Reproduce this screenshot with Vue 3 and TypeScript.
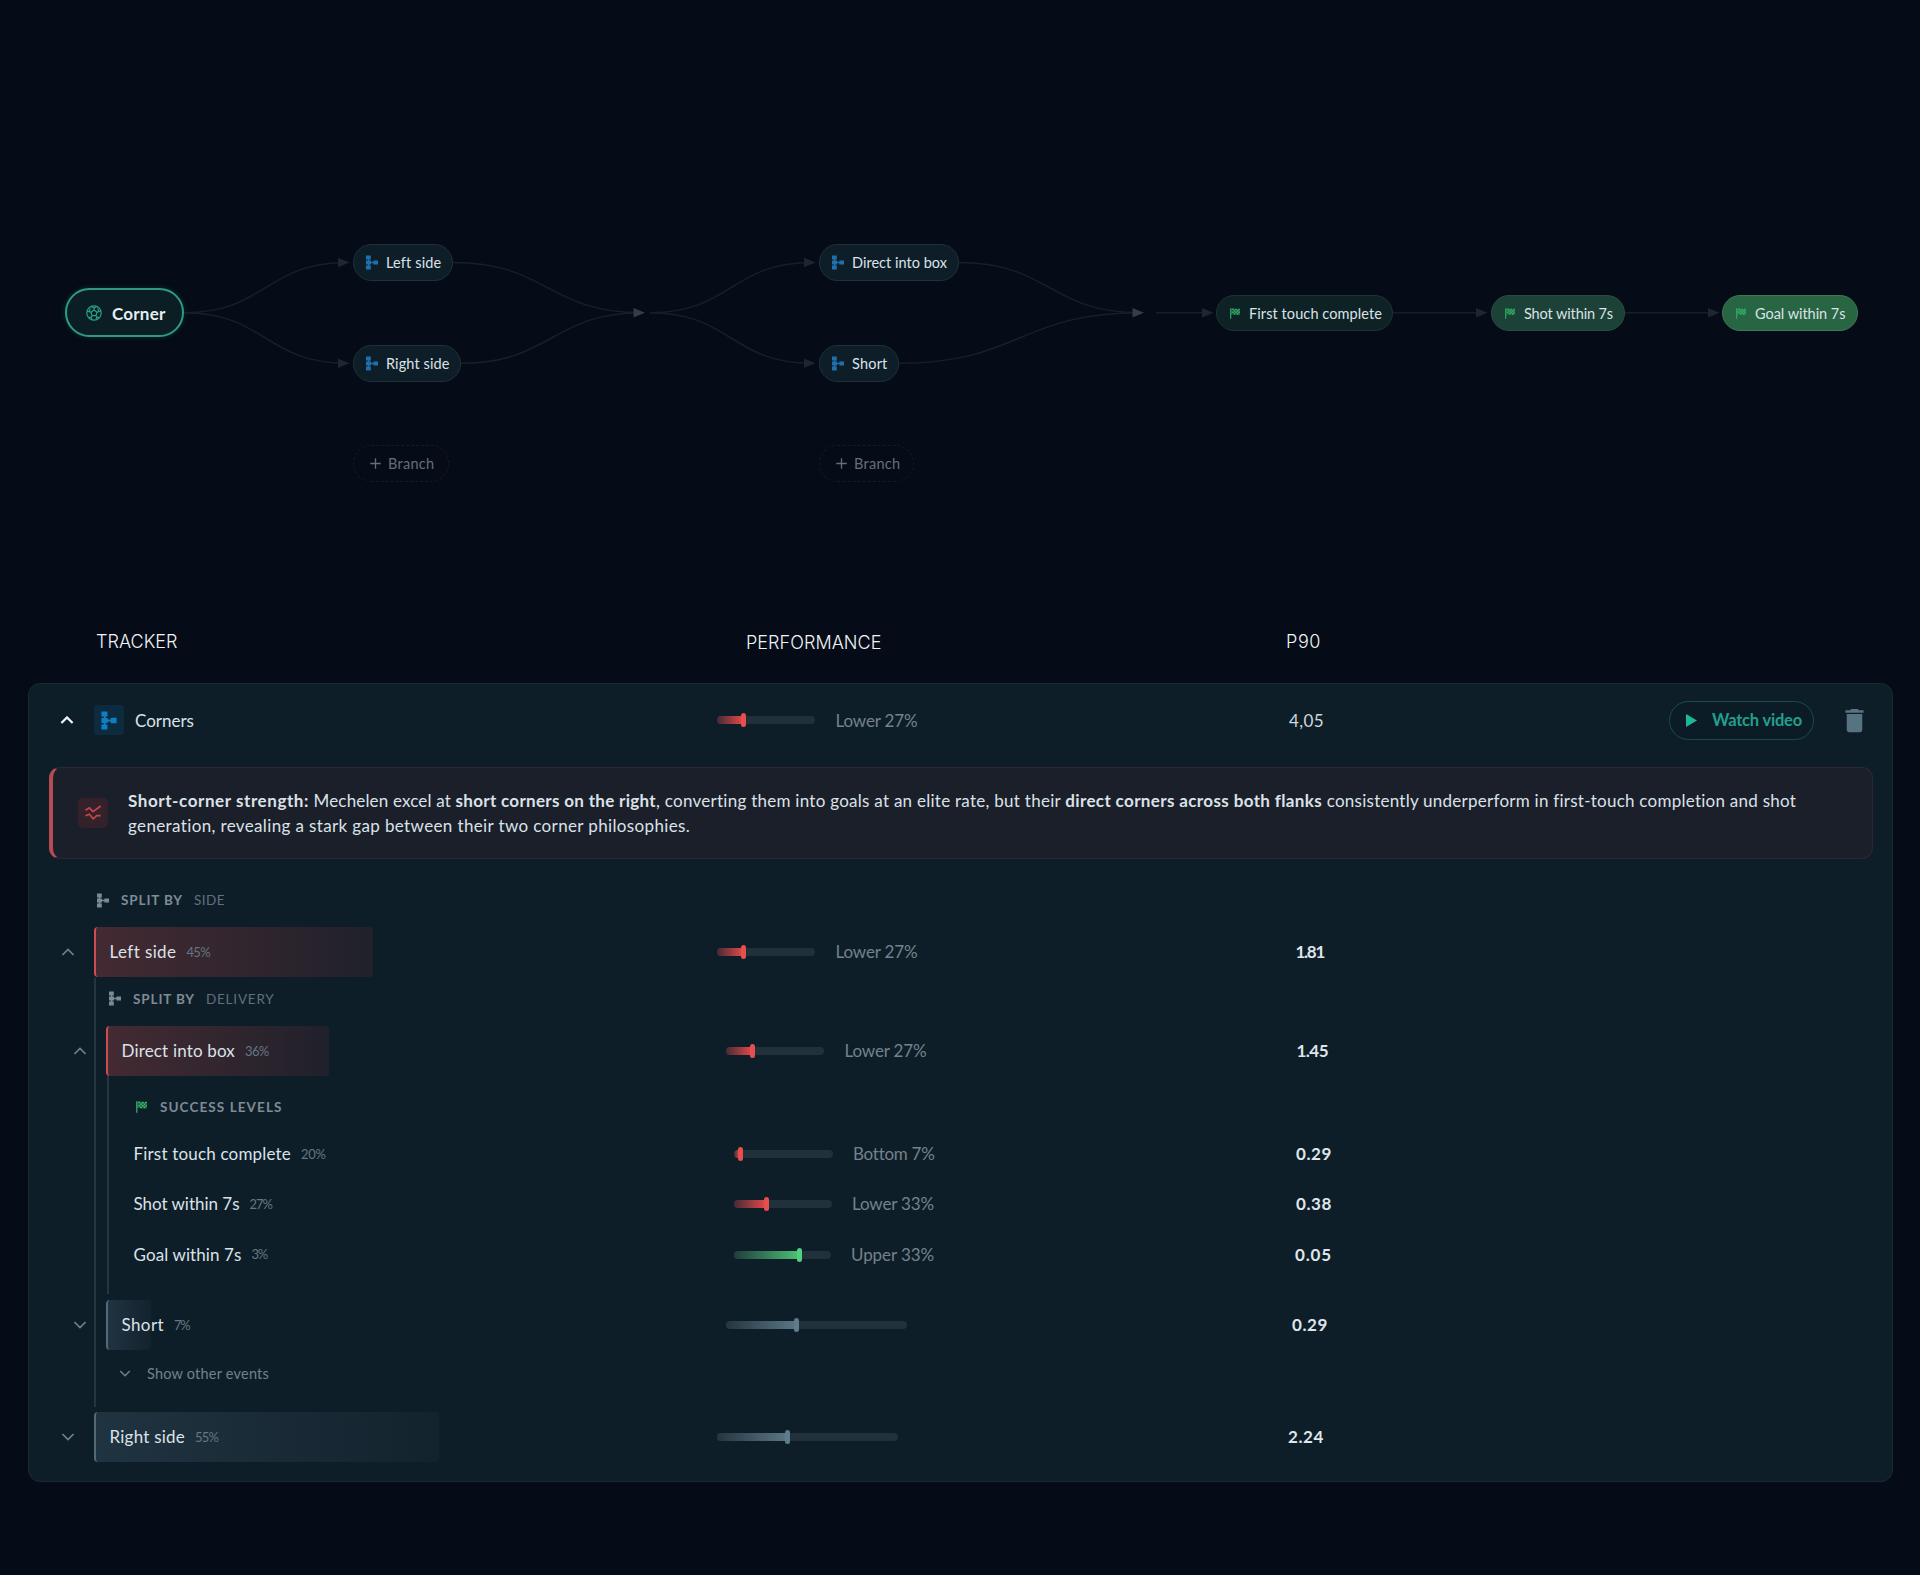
<script setup lang="ts">
import type { Directive } from 'vue'

interface FlowNode {
  label: string
  kind: 'branch' | 'add' | 'flag'
  x: number
  y: number
  w: number
  tw: number
  tone?: string
}

interface Meter {
  width: number
  value: number
  tone: 'red' | 'green' | 'slate'
  label?: string
  lw?: number
}

const vFit: Directive<HTMLElement, number> = {
  mounted(el, binding) {
    el.style.letterSpacing = '0px'
    const natural = el.getBoundingClientRect().width
    const count = (el.textContent ?? '').length
    el.style.letterSpacing = `${((binding.value - natural) / count).toFixed(3)}px`
  },
}

const nodes: FlowNode[] = [
  { label: 'Left side', kind: 'branch', x: 353, y: 244, w: 100, tw: 55 },
  { label: 'Right side', kind: 'branch', x: 353, y: 345, w: 108, tw: 63.5 },
  { label: 'Branch', kind: 'add', x: 353, y: 445, w: 96, tw: 46.5 },
  { label: 'Direct into box', kind: 'branch', x: 819, y: 244, w: 140, tw: 95 },
  { label: 'Short', kind: 'branch', x: 819, y: 345, w: 80, tw: 35.5 },
  { label: 'Branch', kind: 'add', x: 819, y: 445, w: 95, tw: 46.5 },
  { label: 'First touch complete', kind: 'flag', x: 1216, y: 295, w: 177, tw: 133, tone: 'tone-1' },
  { label: 'Shot within 7s', kind: 'flag', x: 1491, y: 295, w: 134, tw: 89, tone: 'tone-2' },
  { label: 'Goal within 7s', kind: 'flag', x: 1722, y: 295, w: 136, tw: 90.5, tone: 'tone-3' },
]

const curve = (x1: number, y1: number, x2: number, y2: number): string => {
  const m = (x1 + x2) / 2
  return `M${x1} ${y1}C${m} ${y1} ${m} ${y2} ${x2} ${y2}`
}

const edges: string[] = [
  curve(184, 312.7, 347, 262.5),
  curve(184, 312.7, 347, 363.3),
  curve(453, 262.5, 642, 312.7),
  curve(461, 363.3, 642, 312.7),
  curve(650, 312.7, 812, 262.5),
  curve(650, 312.7, 812, 363.3),
  curve(959, 262.5, 1140, 312.7),
  curve(899, 363.3, 1140, 312.7),
  'M1156 312.7H1209',
  'M1393 312.7H1484',
  'M1625 312.7H1716',
]

const arrows: { x: number; y: number; strong?: boolean }[] = [
  { x: 338, y: 262.5 },
  { x: 338, y: 363.3 },
  { x: 633.5, y: 312.7, strong: true },
  { x: 804, y: 262.5 },
  { x: 804, y: 363.3 },
  { x: 1132.5, y: 312.7, strong: true },
  { x: 1202, y: 312.7 },
  { x: 1476, y: 312.7 },
  { x: 1708, y: 312.7 },
]

const meters: Record<string, Meter> = {
  corners: { width: 98, value: 26, tone: 'red', label: 'Lower 27%', lw: 82 },
  left: { width: 98, value: 26, tone: 'red', label: 'Lower 27%', lw: 82 },
  direct: { width: 98, value: 26, tone: 'red', label: 'Lower 27%', lw: 82 },
  shortRow: { width: 181, value: 70, tone: 'slate' },
  right: { width: 181, value: 70, tone: 'slate' },
}

const successRows: { name: string; nw: number; pct: string; pw: number; meter: Meter; p90: string; vw: number }[] = [
  { name: 'First touch complete', nw: 157.5, pct: '20%', pw: 24.5, meter: { width: 99, value: 6, tone: 'red', label: 'Bottom 7%', lw: 81 }, p90: '0.29', vw: 36 },
  { name: 'Shot within 7s', nw: 106, pct: '27%', pw: 22.5, meter: { width: 98, value: 32, tone: 'red', label: 'Lower 33%', lw: 82 }, p90: '0.38', vw: 36 },
  { name: 'Goal within 7s', nw: 108, pct: '3%', pw: 15.5, meter: { width: 97, value: 65, tone: 'green', label: 'Upper 33%', lw: 83 }, p90: '0.05', vw: 37 },
]

const insight: { text: string; w: number; bold?: boolean }[] = [
  { text: 'Short-corner strength:', w: 181, bold: true },
  { text: ' Mechelen excel at ', w: 146.5 },
  { text: 'short corners on the right', w: 200.5, bold: true },
  { text: ', converting them into goals at an elite rate, but their ', w: 409.5 },
  { text: 'direct corners across both flanks', w: 257, bold: true },
  { text: ' consistently underperform in first-touch completion and shot', w: 474 },
]
</script>

<template>
  <main class="page">
    <svg class="sprite" width="0" height="0" aria-hidden="true">
      <symbol id="i-branch" viewBox="0 0 12 15">
        <path d="M2.6 2V13M2.6 7.5H9" stroke="currentColor" stroke-width="1.5" fill="none" />
        <path d="M0 .4h4.8v4H0zM0 5.5h5v4H0zM0 10.6h4.8v4H0zM7.4 5.4H12v4.2H7.4z" fill="currentColor" />
      </symbol>
      <symbol id="i-flag" viewBox="0 0 11 12">
        <path d="M.2 .2h1.2v11.6H.2z" fill="currentColor" />
        <path d="M1 .7q2.500-.5 5 0t5 0v6.600q-2.500.5-5 0t-5 0z" fill="currentColor" opacity=".4" />
        <path d="M2.500.6h1.700v1.600H2.500zM6 .8h1.700v1.600H6zM9.200.8h1.700v1.500H9.200zM4.200 2.200H6v1.700H4.200zM7.700 2.400h1.600v1.600H7.700zM2.500 3.900h1.700v1.600H2.500zM6 3.900h1.700v1.600H6zM9.300 3.900h1.600v1.600H9.300zM4.200 5.500H6v1.700H4.200zM7.700 5.500h1.600v1.800H7.700z" fill="currentColor" />
      </symbol>
      <symbol id="i-up" viewBox="0 0 14 8">
        <path d="M1.400 7 7 1.400 12.600 7" stroke="currentColor" fill="none" />
      </symbol>
      <symbol id="i-down" viewBox="0 0 14 8">
        <path d="M1.400 1 7 6.600 12.600 1" stroke="currentColor" fill="none" />
      </symbol>
    </svg>

    <section class="flow">
      <svg class="edges" width="1920" height="620" viewBox="0 0 1920 620">
        <path v-for="(d, i) in edges" :key="i" :d="d" fill="none" stroke="#181f2a" stroke-width="1.500" />
        <path
          v-for="(a, i) in arrows"
          :key="'a' + i"
          :d="`M${a.x} ${a.y - 4.700}l11.500 4.700l-11.500 4.700z`"
          :fill="a.strong ? '#363d48' : '#1f2630'"
        />
      </svg>
      <div class="root">
        <svg width="16" height="16" viewBox="0 0 16 16" fill="none" stroke="#2aa189" stroke-width="1.200">
          <circle cx="8" cy="8" r="7.200" />
          <path d="M8 5 11 7.200 9.900 10.700H6.100L5 7.200zM8 5V3.300M11 7.200l1.800-.6M9.900 10.700l1.100 1.600M6.100 10.700 5 12.300M5 7.200 3.200 6.600M5.300 1.500 8 3.300l2.700-1.800M14.900 6.400l-2.100.2-1-3.200M13.600 12.400 11 12.300l-1.200 2.500M6.200 14.800 5 12.300l-2.600.1M4.200 3.400l-1 3.200-2.100-.2" />
        </svg>
        <b v-fit="53.500">Corner</b>
      </div>
      <div
        v-for="(n, i) in nodes"
        :key="i"
        class="node"
        :class="[n.kind, n.tone]"
        :style="{ left: n.x + 'px', top: n.y + 'px', width: n.w + 'px' }"
      >
        <svg v-if="n.kind === 'branch'" class="ic" width="12" height="15"><use href="#i-branch" /></svg>
        <svg v-else-if="n.kind === 'flag'" class="ic" width="10" height="11"><use href="#i-flag" /></svg>
        <svg v-else class="ic" width="11" height="11" viewBox="0 0 11 11"><path d="M5.500 .3V10.700M.3 5.500H10.700" stroke="currentColor" stroke-width="1.300" /></svg>
        <span v-fit="n.tw">{{ n.label }}</span>
      </div>
    </section>

    <header class="heads">
      <span class="h-tracker"><span v-fit="81.500">TRACKER</span></span>
      <span class="h-perf"><span v-fit="135.500">PERFORMANCE</span></span>
      <span class="h-p90"><span v-fit="35">P90</span></span>
    </header>

    <section class="card">
      <div class="row top">
        <svg class="chev bright" width="14" height="8"><use href="#i-up" /></svg>
        <div class="title">
          <span class="badge"><svg width="16" height="19"><use href="#i-branch" /></svg></span>
          <span v-fit="59" class="name">Corners</span>
        </div>
        <div class="perf">
          <i class="meter red" :style="{ width: meters.corners.width + 'px' }">
            <i class="fill" :style="{ width: meters.corners.value + 'px' }"></i>
          </i>
          <span v-fit="82" class="rank">{{ meters.corners.label }}</span>
        </div>
        <span class="val plain"><span v-fit="35">4,05</span></span>
        <div class="actions">
          <button class="watch">
            <svg width="11" height="13" viewBox="0 0 11 13"><path d="M0 0 11 6.500 0 13z" fill="#1db899" /></svg>
            <span v-fit="90">Watch video</span>
          </button>
          <svg width="31" height="31" viewBox="0 0 24 24"><path fill="#577382" d="M19,4H15.500L14.500,3H9.500L8.500,4H5V6H19M6,19A2,2 0 0,0 8,21H16A2,2 0 0,0 18,19V7H6V19Z" /></svg>
        </div>
      </div>

      <div class="insight">
        <span class="alert-ic">
          <svg width="30" height="30" viewBox="0 0 30 30" fill="none" stroke="#c4474c" stroke-width="1.700">
            <path d="M7.500 12.200 11.300 9.800 15 13.700 22.700 8M7.500 17.800 11.300 16.200 15.300 20.800 18.700 17.600H22.700" />
          </svg>
        </span>
        <div class="copy">
          <div class="line">
            <span v-for="(s, i) in insight" :key="i" v-fit="s.w" :class="{ bold: s.bold }">{{ s.text }}</span>
          </div>
          <div class="line"><span v-fit="562.500">generation, revealing a stark gap between their two corner philosophies.</span></div>
        </div>
      </div>

      <div class="split first">
        <svg width="12" height="15"><use href="#i-branch" /></svg>
        <b v-fit="62">SPLIT BY</b><span v-fit="31">SIDE</span>
      </div>

      <div class="row d0">
        <svg class="chev" width="14" height="8"><use href="#i-up" /></svg>
        <div class="title">
          <div class="bar red" style="width: 279px"></div>
          <span v-fit="66.500" class="name">Left side</span><span v-fit="23.500" class="pct">45%</span>
        </div>
        <div class="perf">
          <i class="meter red" :style="{ width: meters.left.width + 'px' }"><i class="fill" :style="{ width: meters.left.value + 'px' }"></i></i>
          <span v-fit="82" class="rank">{{ meters.left.label }}</span>
        </div>
        <span class="val"><span v-fit="28.500">1.81</span></span>
      </div>

      <div class="group g1">
        <div class="split second">
          <svg width="12" height="15"><use href="#i-branch" /></svg>
          <b v-fit="62">SPLIT BY</b><span v-fit="68.500">DELIVERY</span>
        </div>
        <div class="row d1">
          <svg class="chev" width="14" height="8"><use href="#i-up" /></svg>
          <div class="title">
            <div class="bar red" style="width: 223px"></div>
            <span v-fit="113.500" class="name">Direct into box</span><span v-fit="23.500" class="pct">36%</span>
          </div>
          <div class="perf">
            <i class="meter red" :style="{ width: meters.direct.width + 'px' }"><i class="fill" :style="{ width: meters.direct.value + 'px' }"></i></i>
            <span v-fit="82" class="rank">{{ meters.direct.label }}</span>
          </div>
          <span class="val"><span v-fit="31.500">1.45</span></span>
        </div>

        <div class="group g2">
          <div class="success-label">
            <svg width="11" height="12"><use href="#i-flag" /></svg>
            <b v-fit="122.500">SUCCESS LEVELS</b>
          </div>
          <div v-for="r in successRows" :key="r.name" class="row d2">
            <div class="title">
              <span v-fit="r.nw" class="name">{{ r.name }}</span><span v-fit="r.pw" class="pct">{{ r.pct }}</span>
            </div>
            <div class="perf">
              <i class="meter" :class="r.meter.tone" :style="{ width: r.meter.width + 'px' }"><i class="fill" :style="{ width: r.meter.value + 'px' }"></i></i>
              <span v-fit="r.meter.lw" class="rank">{{ r.meter.label }}</span>
            </div>
            <span class="val"><span v-fit="r.vw">{{ r.p90 }}</span></span>
          </div>
        </div>

        <div class="row d1">
          <svg class="chev" width="14" height="8"><use href="#i-down" /></svg>
          <div class="title">
            <div class="bar slate" style="width: 45px"></div>
            <span v-fit="42.500" class="name">Short</span><span v-fit="15.500" class="pct">7%</span>
          </div>
          <div class="perf">
            <i class="meter slate" :style="{ width: meters.shortRow.width + 'px' }"><i class="fill" :style="{ width: meters.shortRow.value + 'px' }"></i></i>
          </div>
          <span class="val"><span v-fit="36">0.29</span></span>
        </div>
        <div class="more">
          <svg class="chev" width="12" height="7"><use href="#i-down" /></svg>
          <span v-fit="122">Show other events</span>
        </div>
      </div>

      <div class="row d0 last">
        <svg class="chev" width="14" height="8"><use href="#i-down" /></svg>
        <div class="title">
          <div class="bar slate" style="width: 345px"></div>
          <span v-fit="75.500" class="name">Right side</span><span v-fit="23" class="pct">55%</span>
        </div>
        <div class="perf">
          <i class="meter slate" :style="{ width: meters.right.width + 'px' }"><i class="fill" :style="{ width: meters.right.value + 'px' }"></i></i>
        </div>
        <span class="val"><span v-fit="36">2.24</span></span>
      </div>
    </section>
  </main>
</template>

<style>
body {
  background: #050c17;
}
</style>

<style scoped>
* {
  box-sizing: border-box;
}
.page {
  width: 1920px;
  height: 1575px;
  overflow: hidden;
  background: #050c17;
  color: #dbe2e8;
  font-family: Lato, 'Open Sans', sans-serif;
  font-size: 17px;
}
.page span,
.page b {
  white-space: pre;
}
.sprite {
  position: absolute;
}
.flow {
  position: relative;
  height: 620px;
}
.edges {
  display: block;
}
.root {
  position: absolute;
  left: 65px;
  top: 288px;
  width: 119px;
  height: 49px;
  display: flex;
  align-items: center;
  gap: 10px;
  padding-left: 19px;
  border: 2px solid #2f9986;
  border-radius: 25px;
  background: #0a1e24;
  box-shadow: 0 0 5px #06312f;
  color: #e6eef2;
  font-size: 17px;
}
.root b {
  font-weight: 700;
  padding-top: 1px;
}
.node {
  position: absolute;
  height: 37px;
  display: flex;
  align-items: center;
  padding-left: 12px;
  gap: 8px;
  border: 1px solid #202f39;
  border-radius: 19px;
  background: #0e1e29;
  font-size: 14.5px;
}
.node.branch .ic {
  color: #1d70ab;
}
.node.add {
  background: none;
  border: 1px dashed #131c27;
  color: #676e78;
  padding-left: 16px;
  gap: 7px;
}
.node.flag {
  height: 36px;
  padding-left: 13px;
  gap: 9px;
}
.node.flag .ic {
  color: #32b266;
}
.node.flag span {
  padding-top: 1px;
}
.tone-1 {
  background: #0e2226;
  border-color: #1f3135;
}
.tone-2 {
  background: #1c4136;
  border-color: #2b4c44;
}
.tone-3 {
  background: #286543;
  border-color: #3f7657;
}
.heads {
  display: flex;
  height: 63px;
  padding-left: 96px;
  font-family: Inter, sans-serif;
  font-weight: 300;
  font-size: 18px;
  line-height: 22px;
  color: #f1f4f7;
}
.heads > span {
  padding-top: 11px;
}
.h-tracker {
  width: 650px;
}
.heads .h-perf {
  width: 540px;
  padding-top: 12px;
}
.card {
  width: 1865px;
  height: 799px;
  margin-left: 28px;
  border: 1px solid #192a35;
  border-radius: 12px;
  background: #0e1e29;
}
.row {
  display: grid;
  grid-template-columns: 33px 623px 1fr 60px 548px;
  align-items: center;
  height: 50px;
  margin-left: 32px;
}
.chev {
  color: #6f818d;
  stroke-width: 1.7;
}
.chev.bright {
  color: #f2f5f7;
  stroke-width: 2.2;
}
.top {
  height: 72px;
  margin-left: 31px;
  grid-template-columns: 34px 623px 1fr 60px 548px;
}
.badge {
  width: 30px;
  height: 30px;
  display: flex;
  align-items: center;
  justify-content: center;
  border-radius: 4px;
  background: #0d2b3f;
  color: #0e7fc4;
  margin-right: 11px;
}
.title {
  position: relative;
  display: flex;
  align-items: center;
  height: 50px;
}
.name,
.pct {
  position: relative;
}
.name,
.rank,
.val {
  padding-bottom: 1px;
}
.top .name,
.top .rank,
.top .val {
  padding-bottom: 0;
}
.pct {
  margin-left: 10px;
  padding-bottom: 1px;
  font-size: 13px;
  color: #647783;
}
.bar {
  position: absolute;
  left: 0;
  top: 0;
  height: 50px;
  border-radius: 4px;
  border-left: 2px solid;
}
.bar.red {
  border-color: #cf4d52;
  background: linear-gradient(90deg, #442a32, #20212b);
}
.bar.slate {
  border-color: #526a78;
  background: linear-gradient(90deg, #203340, #13232e);
}
.d0 .title,
.d1 .title {
  padding-left: 15.500px;
}
.perf {
  display: flex;
  align-items: center;
}
.meter {
  display: block;
  height: 8px;
  border-radius: 4px;
  background: #22303c;
}
.fill {
  display: block;
  position: relative;
  height: 8px;
  border-radius: 4px 0 0 4px;
}
.fill::after {
  content: '';
  position: absolute;
  right: -3px;
  top: -3px;
  width: 5px;
  height: 14px;
  border-radius: 3px;
  background: var(--tone);
}
.meter.red {
  --tone: #e5504f;
}
.red .fill {
  background: linear-gradient(90deg, #442b34, #e44949);
}
.meter.green {
  --tone: #53cd7e;
}
.green .fill {
  background: linear-gradient(90deg, #213c3c, #4cc075);
}
.meter.slate {
  --tone: #5f7c8b;
}
.slate .fill {
  background: linear-gradient(90deg, #25353f, #5a7685);
}
.rank {
  margin-left: 20.500px;
  color: #74828c;
}
.val {
  text-align: right;
  font-weight: 700;
  color: #dfe5ea;
}
.val.plain {
  font-weight: 400;
  color: #d0d7dd;
}
.top .val,
.d0 .val {
  padding-right: 20px;
}
.actions {
  display: flex;
  align-items: center;
  gap: 25px;
  padding-left: 325px;
}
.watch {
  display: flex;
  align-items: center;
  gap: 15px;
  flex: none;
  width: 145px;
  height: 39px;
  padding: 0 0 0 16px;
  border: 1px solid #184a50;
  border-radius: 20px;
  background: #0c1c27;
  color: #229f8c;
  font: 700 16.5px Lato, sans-serif;
}
.watch span {
  font-weight: 700;
}
.insight {
  display: flex;
  align-items: center;
  width: 1824px;
  height: 92px;
  margin: 11px 0 0 19.500px;
  padding-left: 25px;
  border: 1px solid #2c2831;
  border-left: 4px solid #b74b53;
  border-radius: 11px;
  background: #1a1f2a;
}
.alert-ic {
  width: 30px;
  height: 30px;
  border-radius: 5px;
  background: #34222b;
}
.copy {
  margin-left: 20.500px;
  line-height: 25.3px;
}
.line {
  display: flex;
  height: 25.3px;
}
.line .bold {
  font-weight: 700;
}
.split {
  display: flex;
  align-items: center;
  font-size: 13.5px;
  color: #61707b;
}
.split svg {
  color: #7e8a93;
}
.split b,
.success-label b {
  font-weight: 700;
  color: #7f8b95;
  margin: 0 11px 0 12px;
}
.split.first {
  height: 68px;
  padding: 14px 0 0 68px;
}
.group {
  border-left: 2px solid #233540;
}
.g1 {
  height: 429px;
  margin: 1px 0 5px 65px;
}
.split.second {
  height: 41px;
  margin: 0 0 7px 13px;
}
.g1 > .row {
  margin-left: -23px;
  grid-template-columns: 33px 620px 1fr 60px 548px;
}
.d1 .val {
  padding-right: 16px;
}
.g2 {
  height: 218px;
  margin: 0 0 6px 10.500px;
}
.success-label {
  display: flex;
  align-items: center;
  height: 53px;
  padding: 9px 0 0 27px;
  font-size: 13.5px;
}
.success-label svg {
  color: #35b96a;
}
.success-label b {
  margin-left: 13.500px;
}
.row.d2 {
  height: 50.3px;
  margin-left: 25px;
  grid-template-columns: 600px 1fr 60px 548px;
}
.d2 .val {
  padding-right: 12px;
}
.more {
  display: flex;
  align-items: center;
  height: 47px;
  padding-left: 23px;
  gap: 16px;
  font-size: 14.5px;
  color: #73818b;
}
</style>
